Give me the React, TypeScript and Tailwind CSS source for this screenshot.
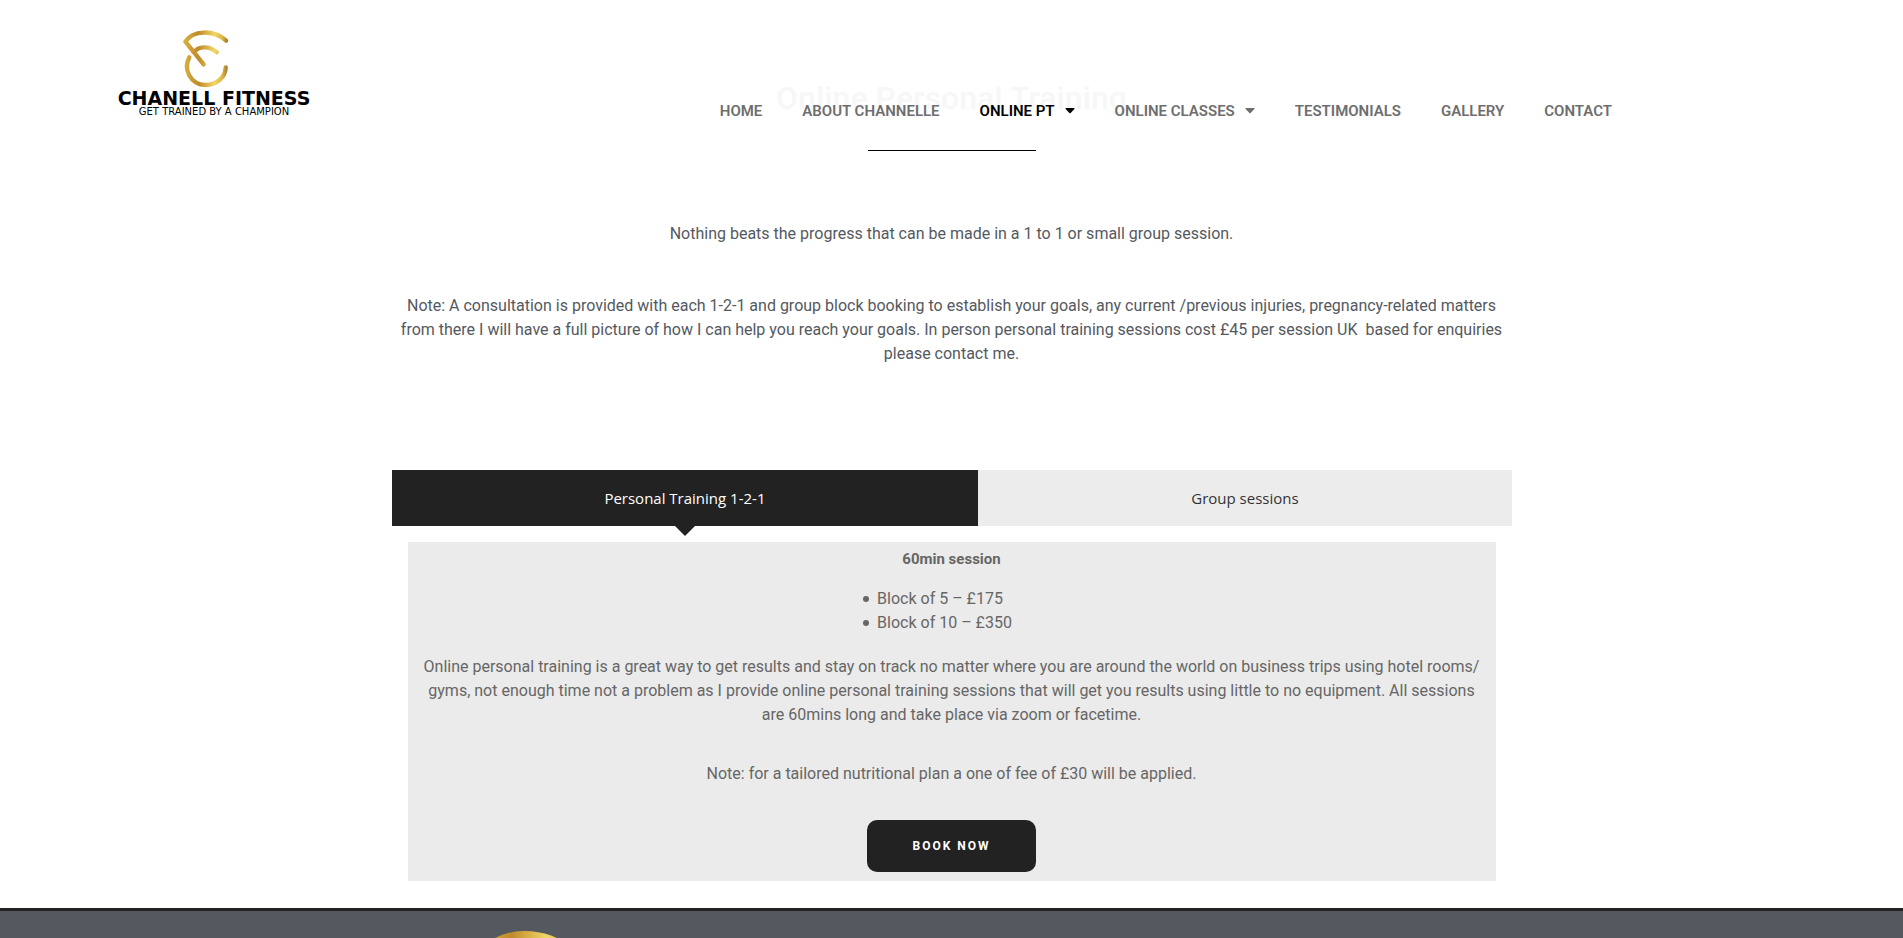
import { useState } from "react";

const navLinks = [
  { label: "HOME" },
  { label: "ABOUT CHANNELLE" },
  { label: "ONLINE PT", active: true, menu: true },
  { label: "ONLINE CLASSES", menu: true },
  { label: "TESTIMONIALS" },
  { label: "GALLERY" },
  { label: "CONTACT" },
];

const tabs = ["Personal Training 1-2-1", "Group sessions"];

const blocks = ["Block of 5 – £175", "Block of 10 – £350"];

function Emblem({ id, className }: { id: string; className: string }) {
  return (
    <svg viewBox="15 15 150 174" className={className} fill="none" aria-hidden="true">
      <defs>
        <linearGradient id={id} x1="20" y1="0" x2="156" y2="0" gradientUnits="userSpaceOnUse">
          <stop offset="0" stopColor="#dcb445" />
          <stop offset="0.35" stopColor="#c08a2a" />
          <stop offset="0.7" stopColor="#f0d766" />
          <stop offset="0.88" stopColor="#dcb548" />
          <stop offset="1" stopColor="#9c7026" />
        </linearGradient>
      </defs>
      <g stroke={`url(#${id})`} strokeWidth="13" strokeLinecap="round" strokeLinejoin="round">
        <path d="M150 47C115 14 50 14 28 50L83 118" />
        <path d="M54 82C66 62 102 62 122 82" />
        <path d="M40 97C20 132 44 180 88 180C124 180 148 155 149 127" />
      </g>
    </svg>
  );
}

function Header() {
  return (
    <header className="absolute inset-x-0 top-0 z-10 flex items-start justify-between bg-white/97 pt-[30px] pr-[271px] pb-7 pl-[114px]">
      <a href="#" className="flex w-[200px] flex-col items-center font-['DejaVu_Sans'] whitespace-nowrap text-black">
        <Emblem id="gold-header" className="mr-4 h-[58px] w-[50px]" />
        <span className="text-[19px] leading-5 font-bold">CHANELL FITNESS</span>
        <span className="text-[10px] leading-2">GET TRAINED BY A CHAMPION</span>
      </a>
      <nav className="mt-[71px] flex font-[Roboto] text-[15px] leading-5 font-semibold">
        {navLinks.map((link) => (
          <a
            key={link.label}
            href="#"
            className={`flex items-center gap-2.5 px-5 ${link.active ? "text-black" : "text-[#6e6e6e]"}`}
          >
            {link.label}
            {link.menu && (
              <svg viewBox="0 0 10 6" className="h-1.5 w-2.5" fill="currentColor" aria-hidden="true">
                <path d="M1 0h8q1 .2.4 1L5.6 5q-.6.6-1.2 0L.6 1Q0 .2 1 0Z" />
              </svg>
            )}
          </a>
        ))}
      </nav>
    </header>
  );
}

export default function App() {
  const [current, setCurrent] = useState(0);

  return (
    <div className="relative min-h-screen overflow-hidden bg-white font-[Roboto] text-base leading-6 text-[#54595f]">
      <Header />

      <main className="mx-auto max-w-[1120px] pt-20 text-center">
        <h1 className="text-[32px] leading-9 font-semibold text-black">Online Personal Training</h1>
        <hr className="mx-auto mt-[34px] w-[15%] border-t border-black" />

        <p className="mt-[71px]">Nothing beats the progress that can be made in a 1 to 1 or small group session.</p>
        <p className="mt-12 px-2">
          Note: A consultation is provided with each 1-2-1 and group block booking to establish your goals, any current
          /previous injuries, pregnancy-related matters from there I will have a full picture of how I can help you reach
          your goals. In person personal training sessions cost £45 per session UK&nbsp; based for enquiries please
          contact me.
        </p>

        {/* Tabs */}
        <div role="tablist" className="mt-[104px] flex font-['Open_Sans'] text-[15px]">
          {tabs.map((tab, i) => (
            <button
              key={tab}
              role="tab"
              aria-selected={i === current}
              onClick={() => setCurrent(i)}
              className={`relative flex-auto py-4 ${i === current ? "bg-[#222] text-white" : "bg-[#ececec] text-[#333]"}`}
            >
              {tab}
              {i === current && (
                <span className="absolute top-full left-1/2 -translate-x-1/2 border-x-10 border-t-10 border-x-transparent border-t-[#222]" />
              )}
            </button>
          ))}
        </div>

        {/* Tab content */}
        <section className="mx-4 mt-4 bg-[#ebebeb] px-3 pt-[5px] pb-[9px] text-[#666]">
          <h2 className="text-[15px] font-bold">60min session</h2>
          <ul className="mx-auto mt-4 w-fit pr-7 text-left">
            {blocks.map((block) => (
              <li key={block} className="flex items-center gap-2">
                <span className="size-1.5 rounded-full bg-[#666]" />
                {block}
              </li>
            ))}
          </ul>
          <p className="mt-5">
            Online personal training is a great way to get results and stay on track no matter where you are around the
            world on business trips using hotel rooms/ gyms, not enough time not a problem as I provide online personal
            training sessions that will get you results using little to no equipment. All sessions are 60mins long and
            take place via zoom or facetime.
          </p>
          <p className="mt-[35px]">Note: for a tailored nutritional plan a one of fee of £30 will be applied.</p>
          <a
            href="#"
            className="mx-auto mt-[34px] block w-fit rounded-[10px] bg-[#222] px-[45px] py-5 text-xs leading-3 font-bold tracking-[2px] text-white"
          >
            BOOK NOW
          </a>
        </section>
      </main>

      <footer className="mt-[27px] h-[30px] overflow-hidden border-t-3 border-[#222] bg-[#54585f] pt-[19px]">
        <div className="mx-auto max-w-[1120px] pl-[81px]">
          <Emblem id="gold-footer" className="h-[128px] w-[110px]" />
        </div>
      </footer>
    </div>
  );
}
